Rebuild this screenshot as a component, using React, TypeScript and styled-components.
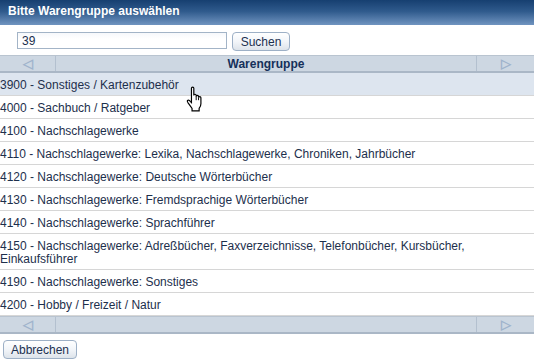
import React from 'react';
import styled, { createGlobalStyle } from 'styled-components';

const GlobalStyle = createGlobalStyle`
html, body {
    margin: 0;
    padding: 0;
    background: #ffffff;
    overflow: hidden;
}
body {
    font-family: "Liberation Sans", Arial, sans-serif;
    font-size: 12px;
}
`;

const Dialog = styled.div`
width: 534px;
height: 361px;
display: flex;
flex-direction: column;
background: #fff;
`;

const TitleBar = styled.div`
height: 25px;
box-sizing: border-box;
padding: 4px 0 0 8px;
background: linear-gradient(to bottom, #163f70 0%, #2f5a8c 45%, #7094c0 100%);
color: #fff;
font-weight: bold;
font-size: 12px;
`;

const SearchRow = styled.div`
height: 30px;
box-sizing: border-box;
display: flex;
align-items: flex-start;
gap: 5px;
padding: 7px 0 0 17px;
`;

const SearchInput = styled.input`
width: 210px;
height: 17px;
box-sizing: border-box;
border: 1px solid #a3b4c7;
padding: 0 0 0 4px;
font-family: "Liberation Sans", Arial, sans-serif;
font-size: 12px;
color: #1b2f4e;
background: linear-gradient(to bottom, #f6f8fb, #ffffff 40%);
outline: none;
`;

const Btn = styled.button<{ w: number }>`
width: ${({ w }) => w}px;
height: 19px;
box-sizing: border-box;
padding: 0;
border: 1px solid #9db0c6;
border-radius: 4px;
background: linear-gradient(to bottom, #ffffff 0%, #f2f5f9 50%, #dde3ea 100%);
font-family: "Liberation Sans", Arial, sans-serif;
font-size: 12px;
color: #1b2f4e;
cursor: pointer;
`;

const GridBar = styled.div`
display: grid;
grid-template-columns: 56px 1fr 57px;
height: 18px;
box-sizing: border-box;
background: #cdd7e2;
border-top: 1px solid #b9c4d0;
border-bottom: 2px solid #aab7c6;
`;

const BarCell = styled.div<{ divider?: boolean }>`
display: flex;
align-items: center;
justify-content: center;
border-right: ${({ divider }) => (divider ? '1px solid #b3c0cf' : 'none')};
color: #15305a;
font-weight: bold;
`;

const Arrow = styled.span`
color: #9fb3cc;
font-size: 13px;
line-height: 1;
`;

const List = styled.div`
display: flex;
flex-direction: column;
position: relative;
`;

const Row = styled.div<{ active?: boolean }>`
padding: 6px 0 3px 0;
line-height: 13px;
color: #1d2f4c;
background: ${({ active }) => (active ? '#dde5ef' : '#fff')};
border-bottom: 1px solid #d6d6d6;
`;

const Footer = styled.div`
padding: 6px 0 0 3px;
`;

const Cursor = styled.svg`
position: absolute;
left: 184px;
top: 13px;
`;

const items = [
    '3900 - Sonstiges / Kartenzubehör',
    '4000 - Sachbuch / Ratgeber',
    '4100 - Nachschlagewerke',
    '4110 - Nachschlagewerke: Lexika, Nachschlagewerke, Chroniken, Jahrbücher',
    '4120 - Nachschlagewerke: Deutsche Wörterbücher',
    '4130 - Nachschlagewerke: Fremdsprachige Wörterbücher',
    '4140 - Nachschlagewerke: Sprachführer',
    '4150 - Nachschlagewerke: Adreßbücher, Faxverzeichnisse, Telefonbücher, Kursbücher, Einkaufsführer',
    '4190 - Nachschlagewerke: Sonstiges',
    '4200 - Hobby / Freizeit / Natur',
];

function Bar({ title }: { title?: string }) {
    return (
        <GridBar>
            <BarCell divider><Arrow>◁</Arrow></BarCell>
            <BarCell divider>{title}</BarCell>
            <BarCell><Arrow>▷</Arrow></BarCell>
        </GridBar>
    );
}

export default function App() {
    return (
        <>
            <GlobalStyle />
            <Dialog>
                <TitleBar>Bitte Warengruppe auswählen</TitleBar>
                <SearchRow>
                    <SearchInput defaultValue="39" />
                    <Btn w={58}>Suchen</Btn>
                </SearchRow>
                <Bar title="Warengruppe" />
                <List>
                    {items.map((item, i) => (
                        <Row key={item} active={i === 0}>{item}</Row>
                    ))}
                    <Cursor width="22" height="26" viewBox="0 0 17 22">
                        <path
                            d="M5.5 2 Q5.5 1 6.5 1 Q7.5 1 7.5 2 V8 Q7.5 7 8.5 7 Q9.5 7 9.5 8 V9 Q9.5 8 10.5 8 Q11.5 8 11.5 9 V10 Q11.5 9 12.5 9 Q13.5 9 13.5 10 V15 Q13.5 17 12 19 V21 H6 V19 L2.5 14 Q1.5 12.5 2.5 12 Q3.5 11.5 4.5 13 L5.5 14 Z"
                            fill="#fff"
                            stroke="#000"
                            strokeWidth="1"
                        />
                        <path d="M9.5 9 V12 M11.5 10 V12" stroke="#000" strokeWidth="0.8" fill="none" />
                    </Cursor>
                </List>
                <Bar />
                <Footer>
                    <Btn w={74}>Abbrechen</Btn>
                </Footer>
            </Dialog>
        </>
    );
}
